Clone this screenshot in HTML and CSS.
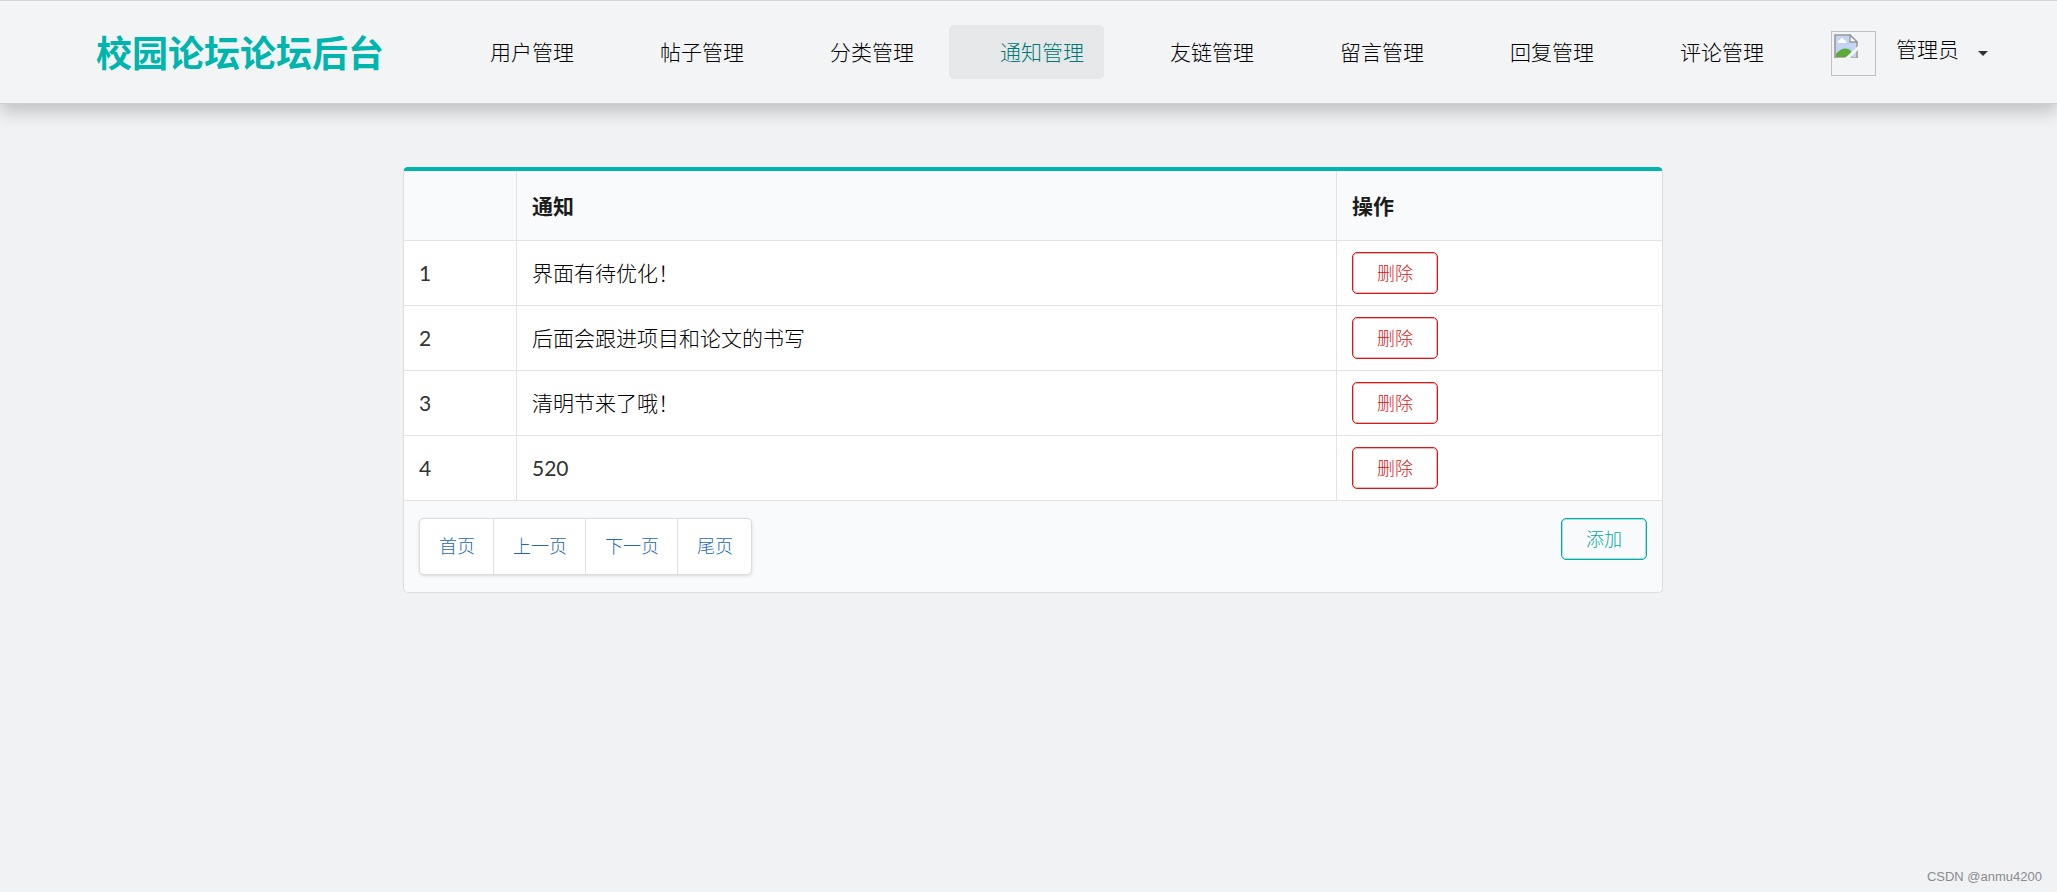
FILE: index.html
```html
<!DOCTYPE html>
<html lang="zh-CN">
<head>
<meta charset="utf-8">
<title>校园论坛论坛后台</title>
<link rel="stylesheet" href="styles.css">
</head>
<body>
<header class="topbar">
  <h1 class="brand">校园论坛论坛后台</h1>
  <nav class="nav">
    <a class="nav-item" href="#">用户管理</a>
    <a class="nav-item" href="#">帖子管理</a>
    <a class="nav-item" href="#">分类管理</a>
    <a class="nav-item active" href="#">通知管理</a>
    <a class="nav-item" href="#">友链管理</a>
    <a class="nav-item" href="#">留言管理</a>
    <a class="nav-item" href="#">回复管理</a>
    <a class="nav-item" href="#">评论管理</a>
  </nav>
  <button class="user" type="button">
    <span class="avatar">
      <svg width="24" height="24" viewBox="0 0 24 24" aria-hidden="true">
        <path d="M1 1H16L23 8V23H1Z" fill="#c3d4f5"/>
        <path d="M4 9C3 7 5 6 6 6C7 3 10 4 10 6C12 6 13 8 12 9Z" fill="#fff"/>
        <path d="M2 23V20C7 14 13 13 17 17L18 23Z" fill="#5aab3a"/>
        <path d="M1 1H16L23 8V24H1Z" fill="none" stroke="#999" stroke-width="1.6"/>
        <path d="M16 1V8H23Z" fill="#fff" stroke="#999" stroke-width="1.4"/>
        <path d="M24 12V16L16 24H11Z" fill="#f3f4f6"/>
      </svg>
    </span>
    <span class="user-name">管理员</span>
    <svg class="caret" width="10" height="5" viewBox="0 0 10 5" aria-hidden="true"><path d="M0 0H10L5 5Z" fill="#333"/></svg>
  </button>
</header>
<main class="content">
  <table class="notices">
    <thead>
      <tr><th class="col-index"></th><th class="col-text">通知</th><th>操作</th></tr>
    </thead>
    <tbody>
      <tr><td class="num">1</td><td>界面有待优化！</td><td><button class="btn danger" type="button">删除</button></td></tr>
      <tr><td class="num">2</td><td>后面会跟进项目和论文的书写</td><td><button class="btn danger" type="button">删除</button></td></tr>
      <tr><td class="num">3</td><td>清明节来了哦！</td><td><button class="btn danger" type="button">删除</button></td></tr>
      <tr><td class="num">4</td><td class="num">520</td><td><button class="btn danger" type="button">删除</button></td></tr>
    </tbody>
    <tfoot>
      <tr><td colspan="3">
        <div class="foot">
          <div class="pager">
            <a href="#">首页</a><a href="#">上一页</a><a href="#">下一页</a><a href="#">尾页</a>
          </div>
          <button class="btn add" type="button">添加</button>
        </div>
      </td></tr>
    </tfoot>
  </table>
</main>
<footer class="watermark">CSDN @anmu4200</footer>
</body>
</html>
```
FILE: styles.css
```css
* { box-sizing: border-box; }

body {
  margin: 0;
  min-height: 100vh;
  display: flex;
  flex-direction: column;
  background: #f1f2f4;
  color: #000;
  font-family: Lato, "Noto Sans CJK SC", sans-serif;
  font-size: 21px;
  font-weight: 300;
  line-height: 30px;
}

a { text-decoration: none; }
button { font: inherit; cursor: pointer; }

.topbar {
  display: flex;
  align-items: center;
  height: 104px;
  padding: 0 69px 0 96px;
  background: #f3f4f6;
  border-top: 1px solid #d4d4d5;
  border-bottom: 1px solid #d0d1d3;
  box-shadow: 0 8px 16px rgba(0, 0, 0, 0.2);
}

.brand {
  margin: 2px 55px 0 0;
  color: #00b5ad;
  font-size: 36px;
  font-weight: 700;
  line-height: 48px;
  white-space: nowrap;
}

.nav { display: flex; gap: 15px; }

.nav-item {
  padding: 12px 20px 12px 51px;
  border-radius: 5px;
  color: #000;
  white-space: nowrap;
}
.nav-item.active { background: #e6e7e9; color: #007878; }

.user {
  display: flex;
  align-items: center;
  margin: 2px 0 0 auto;
  padding: 0;
  border: 0;
  background: none;
  color: #000;
}

.avatar {
  width: 45px;
  height: 45px;
  padding: 2px;
  border: 1px solid #c0c0c0;
  display: flex;
}

.user-name { margin: 0 19px 8px 20px; white-space: nowrap; }

.content { padding: 63px 20px 20px 29px; }

.notices {
  width: 100%;
  max-width: 1260px;
  margin: 0 auto;
  background: #fff;
  border: 1px solid #dcddde;
  border-top: 4px solid #00b5ad;
  border-radius: 5px;
  border-collapse: separate;
  border-spacing: 0;
}

.notices th {
  padding: 20px 15px 19px;
  background: #f9fafb;
  color: #1c1c1c;
  text-align: left;
  font-weight: 700;
  border-bottom: 1px solid #e2e3e4;
}
.notices td {
  height: 65px;
  padding: 10px 15px;
  border-bottom: 1px solid #e2e3e4;
}
.notices th + th,
.notices td + td { border-left: 1px solid #e2e3e4; }
.notices .num { color: #333; font-weight: 400; }
.notices tfoot td {
  padding: 17px 15px;
  background: #f9fafb;
  border-bottom: 0;
  border-radius: 0 0 5px 5px;
}
.notices .col-index { width: 112px; }
.notices .col-text { width: 820px; }

.btn {
  display: block;
  padding: 5px 24px;
  border: 1px solid currentColor;
  border-radius: 5px;
  background: transparent;
  font-size: 18px;
  white-space: nowrap;
}
.danger { color: #d81818; box-shadow: inset 0 0 0 1px rgba(219, 40, 40, 0.35); }
.add { color: #00aba3; box-shadow: inset 0 0 0 1px rgba(0, 181, 173, 0.35); }

.foot {
  display: flex;
  justify-content: space-between;
  align-items: flex-start;
}

.pager {
  display: flex;
  background: #fff;
  border: 1px solid #dcddde;
  border-radius: 5px;
  box-shadow: 0 1px 3px rgba(34, 36, 38, 0.15);
  font-size: 18px;
}
.pager a {
  padding: 12px 18px 13px 19px;
  color: #2569b5;
}
.pager a + a { border-left: 1px solid #e0e0e1; }

.watermark {
  margin-top: auto;
  padding: 0 15px 5px 0;
  color: #8a8b8e;
  font-family: "Liberation Sans", Arial, sans-serif;
  font-size: 13px;
  font-weight: 400;
  line-height: 20px;
  text-align: right;
}
```
